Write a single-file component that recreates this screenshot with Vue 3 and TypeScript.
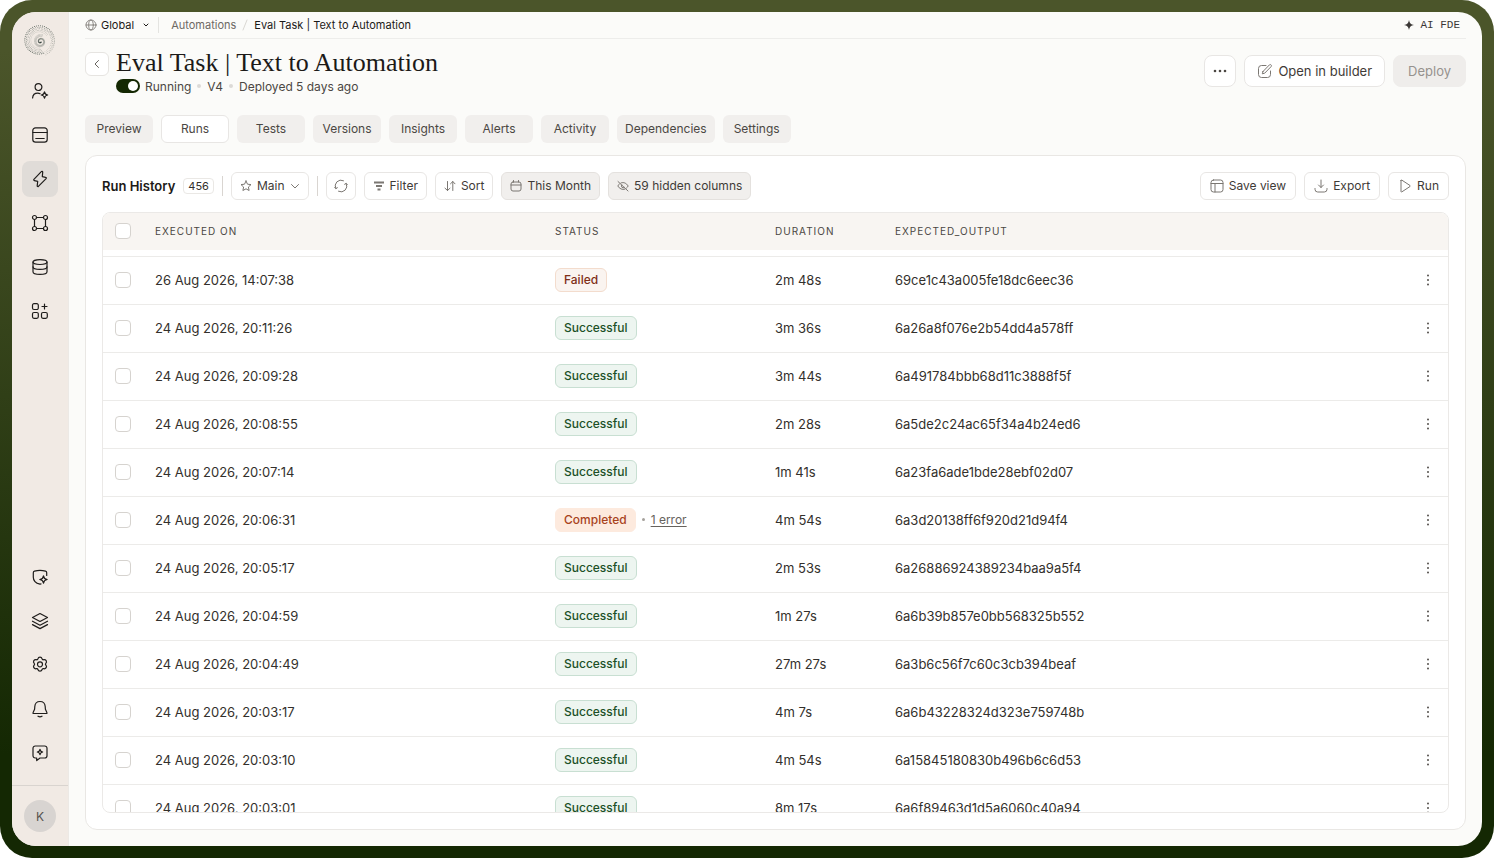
<script setup lang="ts">
interface Run {
  date: string
  status: 'Failed' | 'Successful' | 'Completed'
  duration: string
  output: string
  errors?: string
}

const tabs = ['Preview', 'Runs', 'Tests', 'Versions', 'Insights', 'Alerts', 'Activity', 'Dependencies', 'Settings']

const runs: Run[] = [
  { date: '26 Aug 2026, 14:07:38', status: 'Failed', duration: '2m 48s', output: '69ce1c43a005fe18dc6eec36' },
  { date: '24 Aug 2026, 20:11:26', status: 'Successful', duration: '3m 36s', output: '6a26a8f076e2b54dd4a578ff' },
  { date: '24 Aug 2026, 20:09:28', status: 'Successful', duration: '3m 44s', output: '6a491784bbb68d11c3888f5f' },
  { date: '24 Aug 2026, 20:08:55', status: 'Successful', duration: '2m 28s', output: '6a5de2c24ac65f34a4b24ed6' },
  { date: '24 Aug 2026, 20:07:14', status: 'Successful', duration: '1m 41s', output: '6a23fa6ade1bde28ebf02d07' },
  { date: '24 Aug 2026, 20:06:31', status: 'Completed', duration: '4m 54s', output: '6a3d20138ff6f920d21d94f4', errors: '1 error' },
  { date: '24 Aug 2026, 20:05:17', status: 'Successful', duration: '2m 53s', output: '6a26886924389234baa9a5f4' },
  { date: '24 Aug 2026, 20:04:59', status: 'Successful', duration: '1m 27s', output: '6a6b39b857e0bb568325b552' },
  { date: '24 Aug 2026, 20:04:49', status: 'Successful', duration: '27m 27s', output: '6a3b6c56f7c60c3cb394beaf' },
  { date: '24 Aug 2026, 20:03:17', status: 'Successful', duration: '4m 7s', output: '6a6b43228324d323e759748b' },
  { date: '24 Aug 2026, 20:03:10', status: 'Successful', duration: '4m 54s', output: '6a15845180830b496b6c6d53' },
  { date: '24 Aug 2026, 20:03:01', status: 'Successful', duration: '8m 17s', output: '6a6f89463d1d5a6060c40a94' },
]

interface NavItem { label: string; paths: string[]; active?: boolean }

// 20x20 stroke icons
const mainNav: NavItem[] = [
  { label: 'Agents', paths: ['M8.5 9.5a3.4 3.4 0 1 0 0-6.8 3.4 3.4 0 0 0 0 6.8Z', 'M2.6 17c.2-3 2.2-4.8 5.2-4.8 1 0 1.7.2 2.3.5', 'M14.5 10.8c.3 2 1.2 2.9 3.2 3.2-2 .3-2.9 1.2-3.2 3.2-.3-2-1.200-2.900-3.200-3.200 2-.3 2.900-1.200 3.200-3.200Z'] },
  { label: 'Forms', paths: ['M5.5 2.800h9a2.700 2.700 0 0 1 2.700 2.700v9a2.700 2.700 0 0 1-2.700 2.700h-9a2.700 2.700 0 0 1-2.700-2.700v-9a2.700 2.700 0 0 1 2.700-2.700Z', 'M3 7.500h14M5.800 13.500h8.400'] },
  { label: 'Automations', active: true, paths: ['M11.300 2.700 3.900 10.300c-.4.5-.2 1.200.5 1.300l3.300.7-.5 4.600c0 .7.800.9 1.200.4l7.700-7.700c.4-.5.2-1.200-.5-1.300l-3.300-.7.4-4.500c0-.7-.9-1-1.400-.4Z'] },
  { label: 'Workspaces', paths: ['M4.500 6.500a2 2 0 1 0 0-4 2 2 0 0 0 0 4ZM15.500 6.500a2 2 0 1 0 0-4 2 2 0 0 0 0 4ZM4.500 17.500a2 2 0 1 0 0-4 2 2 0 0 0 0 4ZM15.500 17.500a2 2 0 1 0 0-4 2 2 0 0 0 0 4Z', 'M6.500 4.500h7M6.500 15.500h7M4.500 6.500v7M15.500 6.500v7'] },
  { label: 'Data', paths: ['M10 7.500c4 0 7-1 7-2.400s-3-2.400-7-2.400-7 1-7 2.400 3 2.400 7 2.400Z', 'M3 5.100v9.600c0 1.500 3 2.600 7 2.600s7-1.100 7-2.600V5.100', 'M3 9.800c0 1.500 3 2.600 7 2.600s7-1.100 7-2.600'] },
  { label: 'Apps', paths: ['M4 2.700h2.800a1.500 1.500 0 0 1 1.500 1.500V7a1.500 1.500 0 0 1-1.500 1.500H4A1.500 1.500 0 0 1 2.500 7V4.200A1.500 1.500 0 0 1 4 2.700Z', 'M4 11.500h2.800A1.500 1.500 0 0 1 8.300 13v2.800a1.500 1.500 0 0 1-1.500 1.500H4a1.500 1.500 0 0 1-1.500-1.500V13A1.500 1.500 0 0 1 4 11.500Z', 'M13 11.500h2.800a1.500 1.500 0 0 1 1.500 1.500v2.800a1.500 1.500 0 0 1-1.500 1.500H13a1.500 1.500 0 0 1-1.500-1.500V13a1.500 1.500 0 0 1 1.500-1.500Z', 'M14.500 3v5M12 5.500h5'] },
]

const footNav: NavItem[] = [
  { label: 'Security', paths: ['M16.700 8.500V5.700c0-.8-.5-1.400-1.200-1.600-3.700-1-7.300-1-11 0-.7.2-1.200.8-1.200 1.600v4.500c0 4 3 6 6.700 7l1-.3', 'M13.500 8.800c.3 2.300 1.400 3.400 3.700 3.700-2.300.3-3.400 1.400-3.700 3.700-.3-2.300-1.400-3.400-3.700-3.700 2.300-.3 3.400-1.400 3.700-3.700Z'] },
  { label: 'Layers', paths: ['m10 2.500 7.500 4-7.500 4-7.500-4 7.500-4Z', 'm2.500 10.200 7.500 4 7.500-4', 'm2.500 13.600 7.500 4 7.500-4'] },
  { label: 'Settings', paths: ['M7.900 3.900C8.200 2.800 9 2.200 10 2.200s1.800.6 2.100 1.700c.2.700.8 1 1.500.8 1.100-.3 2 .1 2.600 1 .5.900.4 1.900-.4 2.700-.5.5-.5 1.100 0 1.600.8.800.9 1.800.4 2.700-.6.900-1.500 1.300-2.600 1-.7-.2-1.300.1-1.500.8-.3 1.100-1.100 1.700-2.100 1.700s-1.800-.6-2.100-1.700c-.2-.7-.8-1-1.500-.8-1.100.3-2-.1-2.600-1-.5-.9-.4-1.900.4-2.700.5-.5.5-1.100 0-1.600-.8-.8-.9-1.800-.4-2.700.6-.9 1.500-1.300 2.600-1 .7.200 1.300-.1 1.500-.8Z', 'M10 11.800a2.500 2.500 0 1 0 0-5 2.500 2.500 0 0 0 0 5Z'] },
  { label: 'Notifications', paths: ['M10 2.500c-3 0-5 2-5.200 5l-.2 2.800-1.600 3.400c-.2.400 0 .8.500.8h13c.5 0 .7-.4.500-.8l-1.600-3.400-.2-2.800c-.2-3-2.200-5-5.200-5Z', 'M8 17.200c1.200.7 2.800.7 4 0'] },
  { label: 'Feedback', paths: ['M5.200 3h9.600A2.200 2.200 0 0 1 17 5.200v7.600a2.200 2.200 0 0 1-2.200 2.200H10l-3.300 2.600V15H5.200A2.200 2.200 0 0 1 3 12.800V5.200A2.200 2.200 0 0 1 5.200 3Z', 'M10 6.300c.3 1.800 1 2.400 2.700 2.700-1.700.3-2.400 1-2.700 2.700-.3-1.700-1-2.400-2.700-2.700 1.700-.3 2.400-.9 2.700-2.700Z'] },
]

// Nautilus mark: a ring of dotted ribs that fades clockwise into an inner whorl
interface Dot { x: number; y: number; r: number; o: number }
const dots: Dot[] = []
const ribs = 46
for (let i = 0; i < ribs; i++) {
  const t = i / ribs
  const a = Math.PI * (0.4 + 2 * t)
  const outer = 13.5 + 2.3 * t
  const strength = t < 0.68 ? 0.85 : 0.85 - (t - 0.68) * 1.9
  const count = t < 0.68 ? 5 : 3
  for (let k = 0; k < count; k++) {
    const d = outer - k * 1.5
    const b = a + k * 0.05
    dots.push({ x: 16 + Math.cos(b) * d, y: 16.5 + Math.sin(b) * d, r: 0.5 - k * 0.04, o: strength * (1 - k * 0.15) })
  }
}
for (let i = 0; i < 80; i++) {
  const t = i / 79
  const a = t * Math.PI * 3.4 + 0.6
  for (let k = 0; k < 3; k++) {
    const d = (0.8 + t * 6.5) * (1 - k * 0.14)
    dots.push({ x: 17.5 + Math.cos(a) * d, y: 17.5 + Math.sin(a) * d, r: 0.4, o: 0.32 })
  }
}
</script>

<template>
  <div class="frame">
    <div class="window">
      <aside class="sidebar">
        <svg class="logo" viewBox="0 0 34 34" aria-hidden="true">
          <circle v-for="(d, i) in dots" :key="i" :cx="d.x" :cy="d.y" :r="d.r" :opacity="d.o" />
        </svg>
        <nav class="nav" aria-label="Main">
          <button v-for="n in mainNav" :key="n.label" class="nav-btn" :class="{ active: n.active }" :aria-label="n.label">
            <svg class="i20" viewBox="0 0 20 20"><path v-for="p in n.paths" :key="p" :d="p" /></svg>
          </button>
        </nav>
        <nav class="nav foot" aria-label="Account">
          <button v-for="n in footNav" :key="n.label" class="nav-btn" :aria-label="n.label">
            <svg class="i20" viewBox="0 0 20 20"><path v-for="p in n.paths" :key="p" :d="p" /></svg>
          </button>
        </nav>
        <div class="account"><button class="avatar">K</button></div>
      </aside>

      <main class="main">
        <div class="topbar">
          <button class="scope">
            <svg class="i12" viewBox="0 0 12 12"><circle cx="6" cy="6" r="5" /><ellipse cx="6" cy="6" rx="2.300" ry="5" /><path d="M1 6h10" /></svg>
            <span>Global</span>
            <svg class="i8" viewBox="0 0 8 8"><path d="m2 3 2 2 2-2" /></svg>
          </button>
          <nav class="crumbs" aria-label="Breadcrumb">
            <a href="#" class="muted">Automations</a>
            <svg class="slash" viewBox="0 0 8 12"><path d="M6 1 2 11" /></svg>
            <a href="#">Eval Task | Text to Automation</a>
          </nav>
          <button class="fde">
            <svg viewBox="0 0 10 10"><path d="M5 0c.5 3.200 1.800 4.500 5 5-3.200.5-4.500 1.800-5 5-.5-3.200-1.800-4.500-5-5 3.200-.5 4.500-1.800 5-5Z" /></svg>
            <span>AI FDE</span>
          </button>
        </div>

        <header class="head">
          <button class="back" aria-label="Back"><svg class="i12" viewBox="0 0 12 12"><path d="M7.500 2.500 4 6l3.500 3.500" /></svg></button>
          <div class="titles">
            <h1>Eval Task | Text to Automation</h1>
            <div class="meta">
              <label class="switch"><input type="checkbox" role="switch" checked /><span>Running</span></label>
              <i class="sep"></i><span>V4</span><i class="sep"></i><span>Deployed 5 days ago</span>
            </div>
          </div>
          <div class="actions">
            <button class="btn lg more" aria-label="More"><svg viewBox="0 0 16 4"><circle cx="3" cy="2" r="1.300" /><circle cx="8" cy="2" r="1.300" /><circle cx="13" cy="2" r="1.300" /></svg></button>
            <button class="btn lg">
              <svg class="i16" viewBox="0 0 16 16"><path d="M9 2.500H4.500a3 3 0 0 0-3 3v6a3 3 0 0 0 3 3h6a3 3 0 0 0 3-3V8" /><path d="m6 8.500 6.400-6.600c.5-.5 1.200-.5 1.700 0s.5 1.200 0 1.700L7.700 10.200l-2.400.6L6 8.500Z" /></svg>
              Open in builder
            </button>
            <button class="btn lg deploy" disabled>Deploy</button>
          </div>
        </header>

        <nav class="tabs" aria-label="Sections">
          <button v-for="t in tabs" :key="t" class="tab" :class="{ on: t === 'Runs' }">{{ t }}</button>
        </nav>

        <section class="card">
          <div class="tools">
            <h2>Run History</h2>
            <span class="count">456</span>
            <i class="bar"></i>
            <button class="btn">
              <svg class="i12" viewBox="0 0 12 12"><path d="m6 1 1.500 3.200 3.500.4-2.600 2.400.7 3.500L6 8.800l-3.100 1.700.7-3.500L1 4.600l3.500-.4L6 1Z" /></svg>
              Main
              <svg class="i10" viewBox="0 0 10 10"><path d="m1.500 3.500 3.500 3.500 3.500-3.500" /></svg>
            </button>
            <i class="bar"></i>
            <button class="btn square" aria-label="Refresh">
              <svg class="i14" viewBox="0 0 14 14"><path d="M9.500 1.700A5.800 5.800 0 0 0 1.800 9.500M4.500 12.300a5.800 5.800 0 0 0 7.700-7.800" /><path d="M.6 8.200 1.800 9.700l1.600-1M13.400 5.800 12.200 4.300l-1.600 1" /></svg>
            </button>
            <button class="btn"><svg class="i12 bold" viewBox="0 0 12 12"><path d="M1 2.500h10M3 6h6M4.500 9.500h3" /></svg>Filter</button>
            <button class="btn"><svg class="i12" viewBox="0 0 12 12"><path d="M3.500 1.500v9M1 8.200l2.500 2.300L6 8.200M8.800 10.500v-9M6.500 3.800l2.300-2.300L11 3.800" /></svg>Sort</button>
            <button class="btn filled"><svg class="i12" viewBox="0 0 12 12"><path d="M3 2h6a2 2 0 0 1 2 2v5a2 2 0 0 1-2 2H3a2 2 0 0 1-2-2V4a2 2 0 0 1 2-2ZM1 5h10M3.500.5V2M8.500.5V2" /></svg>This Month</button>
            <button class="btn filled"><svg class="i12" viewBox="0 0 12 12"><path d="M1 1.500 11 11M4 2.900c2.800-1 5.200.2 7.200 3.100-.5.9-1.100 1.600-1.700 2.100M2.700 3.700C2 4.300 1.400 5.100.8 6c1.800 2.800 4.200 4 7 3.200M4.700 5a1.800 1.800 0 0 0 2.500 2.500" /></svg>59 hidden columns</button>
            <div class="right">
              <button class="btn"><svg class="i14" viewBox="0 0 14 14"><rect x="1" y="1" width="12" height="12" rx="2.500" /><path d="M1 4.500h12M5 4.500V13" /></svg>Save view</button>
              <button class="btn"><svg class="i14" viewBox="0 0 14 14"><path d="M7 1v7.500M4.500 6 7 8.500 9.500 6M1 9.500v.8A2.700 2.700 0 0 0 3.700 13h6.600a2.700 2.700 0 0 0 2.700-2.700v-.8" /></svg>Export</button>
              <button class="btn"><svg class="i14" viewBox="0 0 14 14"><path d="M3 1.500v11c0 .5.4.6.8.4L12 7.500c.4-.3.4-.7 0-1L3.800 1.100c-.4-.2-.8-.1-.8.400Z" /></svg>Run</button>
            </div>
          </div>

          <div class="table-wrap">
            <table>
              <colgroup><col class="c-check" /><col class="c-date" /><col class="c-status" /><col class="c-dur" /><col /><col class="c-more" /></colgroup>
              <thead>
                <tr>
                  <th><input type="checkbox" class="check" aria-label="Select all runs" /></th>
                  <th>EXECUTED ON</th><th>STATUS</th><th>DURATION</th><th>EXPECTED_OUTPUT</th><th></th>
                </tr>
              </thead>
              <tbody>
                <tr class="gap" aria-hidden="true"><td colspan="6"></td></tr>
                <tr v-for="r in runs" :key="r.date">
                  <td><input type="checkbox" class="check" :aria-label="'Select run ' + r.date" /></td>
                  <td>{{ r.date }}</td>
                  <td>
                    <div class="state">
                      <span class="pill" :class="r.status.toLowerCase()">{{ r.status }}</span>
                      <template v-if="r.errors"><i class="dot"></i><a href="#" class="err">{{ r.errors }}</a></template>
                    </div>
                  </td>
                  <td>{{ r.duration }}</td>
                  <td>{{ r.output }}</td>
                  <td><button class="kebab" aria-label="Run actions"><svg viewBox="0 0 4 12"><circle cx="2" cy="1.500" r="1" /><circle cx="2" cy="6" r="1" /><circle cx="2" cy="10.500" r="1" /></svg></button></td>
                </tr>
              </tbody>
            </table>
          </div>
        </section>
      </main>
    </div>
  </div>
</template>

<style>
body { margin: 0; background: #fff; }
</style>

<style scoped>
* { box-sizing: border-box; }
.frame { height: 100vh; padding: 12px; border-radius: 32px; background: linear-gradient(#4b552a 0%, #4b552a 6%, #142803 88%); font-family: Inter, "Liberation Sans", sans-serif; font-size: 13px; color: #33302c; }
.window { height: 100%; display: flex; border-radius: 24px; overflow: hidden; background: #fbfbf9; }
button { font: inherit; color: inherit; border: 0; background: none; padding: 0; display: inline-flex; align-items: center; justify-content: center; white-space: nowrap; }
a { color: inherit; text-decoration: none; }
svg { flex: none; fill: none; stroke: currentColor; stroke-width: 1; stroke-linecap: round; stroke-linejoin: round; display: block; }
.i8 { width: 8px; height: 8px; }
.i10 { width: 10px; height: 10px; }
.i12 { width: 12px; height: 12px; }
.i14 { width: 14px; height: 14px; }
.i16 { width: 16px; height: 16px; }
.i20 { width: 20px; height: 20px; stroke-width: 1.2; }

.sidebar { flex: none; width: 57px; background: #f1eae4; border-right: 1px solid #ece9e5; display: flex; flex-direction: column; align-items: center; padding-top: 12px; }
.logo { width: 34px; height: 34px; fill: #33423a; stroke: none; }
.nav { display: flex; flex-direction: column; gap: 8px; margin-top: 15px; }
.nav-btn { width: 36px; height: 36px; border-radius: 8px; color: #1f1d1b; }
.nav-btn.active { background: #e0dcd8; }
.foot { margin-top: auto; }
.account { align-self: stretch; margin-top: 14px; height: 61px; border-top: 1px solid #d9d4cf; display: flex; align-items: center; justify-content: center; }
.avatar { width: 32px; height: 32px; border-radius: 50%; background: #d8d4d1; color: #55514d; font-size: 12px; }

.main { flex: 1; min-width: 0; display: flex; flex-direction: column; padding: 0 16px 16px; }
.topbar { height: 27px; flex: none; display: flex; align-items: center; border-bottom: 1px solid #ededeb; font-size: 11px; color: #1c1a18; }
.scope { gap: 4px; padding-right: 8px; height: 16px; border-right: 1px solid #e4e4e1; }
.scope .i12 { color: #8a8783; }
.scope .i8 { margin-left: 4px; }
.crumbs { display: flex; align-items: center; gap: 5px; margin-left: 12px; }
.muted { color: #6d6964; }
.slash { width: 8px; height: 12px; color: #d9d7d3; }
.fde { margin-left: auto; margin-right: 6px; gap: 6px; font-family: "Liberation Mono", monospace; color: #3b3836; }
.fde svg { width: 10px; height: 10px; fill: currentColor; stroke: none; }

.head { flex: none; display: flex; gap: 7px; padding-top: 9px; height: 76px; align-items: flex-start; }
.back { width: 24px; height: 24px; margin-top: 4px; border: 1px solid #e6e4e1; border-radius: 6px; background: #fff; color: #66625d; }
h1 { margin: 0; font: 400 26px/29px "Liberation Serif", serif; color: #1c1a18; }
.meta { display: flex; align-items: center; gap: 6px; height: 18px; font-size: 12px; color: #4b4743; }
.switch { display: flex; align-items: center; gap: 5px; }
.switch input { appearance: none; margin: 0; width: 24px; height: 14px; border-radius: 7px; background: #142803; display: flex; align-items: center; justify-content: flex-end; padding: 2px; }
.switch input::after { content: ""; width: 10px; height: 10px; border-radius: 50%; background: #fff; }
.sep { width: 4px; height: 4px; border-radius: 50%; background: #dcdad7; }
.actions { margin-left: auto; margin-top: 7px; display: flex; gap: 8px; }

.btn { height: 28px; padding: 0 8px 1px; gap: 5px; border: 1px solid #e8e6e4; border-radius: 6px; background: #fff; font-size: 12px; color: #3f3b37; }
.btn svg { color: #7b7772; }
.btn.lg { height: 32px; padding: 0 12px; font-size: 13px; border-radius: 8px; }
.btn.more { width: 32px; padding: 0; }
.more svg { width: 16px; height: 4px; fill: #4b4743; stroke: none; }
.btn.deploy { background: #efedeb; border-color: #efedeb; color: #96928e; padding: 0 14px; }
.btn.square { width: 30px; padding: 0; }
.btn.filled { background: #f1efed; border-color: #e4e1de; }
.btn .bold { stroke-width: 2; stroke-linecap: butt; }
.right .btn { padding: 0 9px 1px; }

.tabs { display: flex; gap: 8px; flex: none; }
.tab { min-width: 68px; height: 28px; padding: 0 8px 1px; border-radius: 6px; background: #f1efed; font-size: 12px; color: #4b4743; }
.tab.on { background: #fff; border: 1px solid #e8e6e4; }

.card { flex: 1; min-height: 0; margin-top: 12px; padding: 16px; border: 1px solid #e9e7e4; border-radius: 12px; background: #fff; display: flex; flex-direction: column; }
.tools { flex: none; display: flex; align-items: center; gap: 8px; margin-bottom: 12px; }
h2 { margin: 0; font-size: 13px; line-height: 20px; font-weight: 600; color: #1c1a18; }
.count { height: 16px; padding: 0 4px; border: 1px solid #eae8e5; border-radius: 4px; font-size: 11px; line-height: 14px; color: #33302c; }
.bar { width: 1px; height: 20px; background: #d9d5d1; }
.right { margin-left: auto; display: flex; gap: 8px; }

.table-wrap { flex: 1; min-height: 0; overflow: hidden; border: 1px solid #ebe9e7; border-radius: 8px; }
table { width: 100%; table-layout: fixed; border-collapse: separate; border-spacing: 0; }
.c-check, .c-more { width: 40px; }
.c-date { width: 400px; }
.c-status { width: 220px; }
.c-dur { width: 120px; }
th { height: 37px; padding: 0 12px 2px; background: #f8f5f2; text-align: left; font-size: 10px; font-weight: 400; letter-spacing: 1px; color: #4b4743; }
td { height: 48px; padding: 0 12px 2px; border-bottom: 1px solid #ecebe9; white-space: nowrap; }
.gap td { height: 7px; padding: 0; }
.check { appearance: none; display: block; margin: 0; width: 16px; height: 16px; border: 1px solid #d6d3cf; border-radius: 4px; background: #fff; }
.state { display: flex; align-items: center; }
.pill { height: 24px; padding: 0 8px; border: 1px solid; border-radius: 6px; font-size: 12px; line-height: 22px; font-weight: 500; }
.successful { background: #edf5f0; border-color: #c8dfd2; color: #1c5127; }
.failed { background: #faf4f0; border-color: #f3dccd; color: #7f2f17; }
.completed { background: #fdeade; border-color: #fdeade; color: #a8421c; }
.dot { width: 3px; height: 3px; border-radius: 50%; background: #a5a19c; margin: 0 6px; }
.err { font-size: 12px; color: #66625d; text-decoration: underline; text-underline-offset: 2px; }
.kebab { width: 16px; height: 24px; }
.kebab svg { width: 4px; height: 12px; fill: #55514d; stroke: none; }
</style>
